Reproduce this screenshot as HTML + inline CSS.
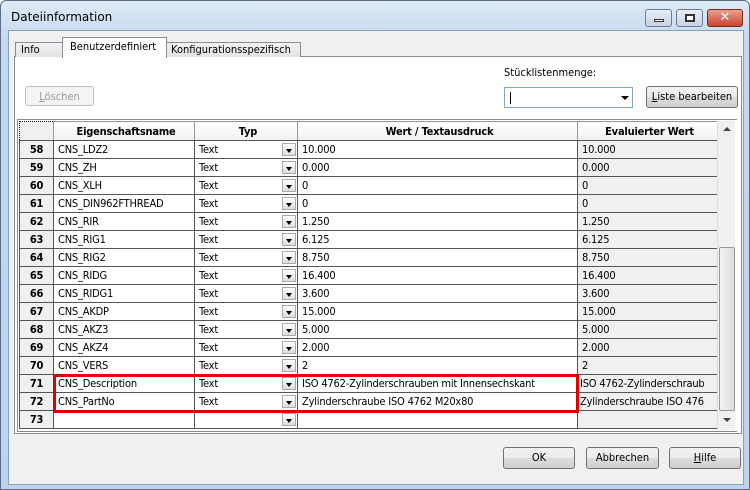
<!DOCTYPE html>
<html><head><meta charset="utf-8"><style>
*{margin:0;padding:0;box-sizing:border-box}
body{width:750px;height:490px;overflow:hidden;background:#fff;font-family:Tahoma,"DejaVu Sans","Liberation Sans",sans-serif;font-size:11px;color:#000;position:relative}
.a{position:absolute}
#frame{left:0;top:0;width:750px;height:490px;background:linear-gradient(#dfeaf6,#c4d8ee 40px,#bcd3ec);border:1px solid #5a6e8a;border-radius:6px 6px 0 0}
#client{left:8px;top:30px;width:736px;height:455px;background:#f0f0f0;border:1px solid #8aa0bc}
.btn{border:1px solid #707070;border-radius:3px;background:linear-gradient(#f2f2f2,#ebebeb 50%,#dddddd 51%,#cfcfcf);text-align:center;line-height:19px;font-size:11px}
.tab{border:1px solid #898c95;border-bottom:none;background:linear-gradient(#f2f2f2,#e3e3e3);padding-left:5px;line-height:14px}
.c{font-family:"DejaVu Sans Condensed","DejaVu Sans",sans-serif}
table{border-collapse:collapse;position:absolute;left:19px;top:121px;table-layout:fixed}
td{border:1px solid #555;height:18px;padding:0 0 0 4px;white-space:nowrap;overflow:hidden;font-size:11px;font-family:"DejaVu Sans Condensed","DejaVu Sans",sans-serif;letter-spacing:-0.2px}
td.n{background:#f0f0f0;font-weight:bold;text-align:center;padding:0}
td.e{background:#f0f0f0}
tr.h td{height:19px;background:linear-gradient(#fff,#f0f0f0);font-weight:bold;text-align:center;border-color:#999 #999 #555 #999}
td.t{position:relative}
td.t i{position:absolute;right:1px;top:2px;width:14px;height:13px;border:1px solid #aaa;background:linear-gradient(#fff,#ddd)}
td.t i:after{content:"";position:absolute;left:3px;top:5px;border:3px solid transparent;border-top:4px solid #000}
</style></head><body>
<div id="frame" class="a"></div>
<div class="a" style="left:11px;top:10px;font-size:12px;font-family:'DejaVu Sans',sans-serif;color:#000">Dateiinformation</div>
<div class="a" style="left:645px;top:9px;width:27px;height:18px;border:1px solid #6a7c96;border-radius:3px;background:linear-gradient(#e8eef7,#c5d3e6)"><div class="a" style="left:8px;top:9px;width:10px;height:3px;background:#fff;border:1px solid #333"></div></div>
<div class="a" style="left:676px;top:9px;width:27px;height:18px;border:1px solid #6a7c96;border-radius:3px;background:linear-gradient(#e8eef7,#c5d3e6)"><div class="a" style="left:8px;top:4px;width:10px;height:8px;border:2px solid #333;background:#fff"></div></div>
<div class="a" style="left:707px;top:9px;width:36px;height:18px;border:1px solid #7a2a20;border-radius:3px;background:linear-gradient(#e8a090,#c7452e);color:#fff;font-weight:bold;text-align:center;line-height:16px;font-size:13px">✕</div>
<div id="client" class="a"></div>
<div class="a" style="left:14px;top:56px;width:728px;height:378px;background:#fff;border:1px solid #898c95"></div>
<div class="a tab c" style="left:15px;top:42px;width:48px;height:15px">Info</div>
<div class="a tab c" style="left:166px;top:42px;width:135px;height:15px;padding-left:4px">Konfigurationsspezifisch</div>
<div class="a c" style="left:62px;top:37px;width:105px;height:21px;background:#fff;border:1px solid #898c95;border-bottom:none;padding-left:7px;line-height:17px">Benutzerdefiniert</div>
<div class="a btn c" style="left:25px;top:86px;width:69px;height:20px;color:#9a9a9a;border-color:#c0c0c0;background:#f4f4f4"><u>L</u>öschen</div>
<div class="a c" style="left:504px;top:66px">Stücklistenmenge:</div>
<div class="a" style="left:504px;top:87px;width:129px;height:21px;border:1px solid #7fa6cc;background:#fff"><div class="a" style="left:5px;top:4px;width:1px;height:12px;background:#000"></div><div class="a" style="left:116px;top:8px;border:4px solid transparent;border-top:4px solid #000"></div></div>
<div class="a btn c" style="left:646px;top:86px;width:92px;height:22px;line-height:20px"><u>L</u>iste bearbeiten</div>
<table>
<colgroup><col style="width:34px"><col style="width:141px"><col style="width:103px"><col style="width:280px"><col style="width:140px"></colgroup>
<tr class="h"><td style="border:1px dotted #000;background:#f0f0f0"></td><td>Eigenschaftsname</td><td>Typ</td><td>Wert / Textausdruck</td><td>Evaluierter Wert</td></tr>
<tr><td class="n">58</td><td>CNS_LDZ2</td><td class="t">Text<i></i></td><td>10.000</td><td class="e">10.000</td></tr>
<tr><td class="n">59</td><td>CNS_ZH</td><td class="t">Text<i></i></td><td>0.000</td><td class="e">0.000</td></tr>
<tr><td class="n">60</td><td>CNS_XLH</td><td class="t">Text<i></i></td><td>0</td><td class="e">0</td></tr>
<tr><td class="n">61</td><td>CNS_DIN962FTHREAD</td><td class="t">Text<i></i></td><td>0</td><td class="e">0</td></tr>
<tr><td class="n">62</td><td>CNS_RIR</td><td class="t">Text<i></i></td><td>1.250</td><td class="e">1.250</td></tr>
<tr><td class="n">63</td><td>CNS_RIG1</td><td class="t">Text<i></i></td><td>6.125</td><td class="e">6.125</td></tr>
<tr><td class="n">64</td><td>CNS_RIG2</td><td class="t">Text<i></i></td><td>8.750</td><td class="e">8.750</td></tr>
<tr><td class="n">65</td><td>CNS_RIDG</td><td class="t">Text<i></i></td><td>16.400</td><td class="e">16.400</td></tr>
<tr><td class="n">66</td><td>CNS_RIDG1</td><td class="t">Text<i></i></td><td>3.600</td><td class="e">3.600</td></tr>
<tr><td class="n">67</td><td>CNS_AKDP</td><td class="t">Text<i></i></td><td>15.000</td><td class="e">15.000</td></tr>
<tr><td class="n">68</td><td>CNS_AKZ3</td><td class="t">Text<i></i></td><td>5.000</td><td class="e">5.000</td></tr>
<tr><td class="n">69</td><td>CNS_AKZ4</td><td class="t">Text<i></i></td><td>2.000</td><td class="e">2.000</td></tr>
<tr><td class="n">70</td><td>CNS_VERS</td><td class="t">Text<i></i></td><td>2</td><td class="e">2</td></tr>
<tr><td class="n">71</td><td>CNS_Description</td><td class="t">Text<i></i></td><td>ISO 4762-Zylinderschrauben mit Innensechskant</td><td class="e" style="padding-left:2px">ISO 4762-Zylinderschraub</td></tr>
<tr><td class="n">72</td><td>CNS_PartNo</td><td class="t">Text<i></i></td><td>Zylinderschraube ISO 4762 M20x80</td><td class="e" style="padding-left:2px">Zylinderschraube ISO 476</td></tr>
<tr><td class="n">73</td><td></td><td class="t"><i></i></td><td></td><td class="e"></td></tr>
</table>
<div class="a" style="left:17px;top:119px;width:720px;height:313px;border:1px solid #888;border-right:none;pointer-events:none"></div>
<div class="a" style="left:717px;top:121px;width:18px;height:309px;background:#f0f0f0;border-left:1px solid #ddd"><div class="a" style="left:5px;top:6px;border:4px solid transparent;border-bottom:4px solid #444;border-top:none"></div><div class="a" style="left:1px;top:126px;width:16px;height:164px;border:1px solid #999;border-radius:2px;background:linear-gradient(90deg,#f4f4f4,#dcdcdc)"></div><div class="a" style="left:5px;top:297px;border:4px solid transparent;border-top:4px solid #444;border-bottom:none"></div></div>
<div class="a" style="left:53px;top:374px;width:526px;height:39px;border:3px solid #e00000"></div>
<div class="a btn c" style="left:503px;top:447px;width:72px;height:22px;line-height:20px">OK</div>
<div class="a btn c" style="left:586px;top:447px;width:73px;height:22px;line-height:20px">Abbrechen</div>
<div class="a btn c" style="left:669px;top:447px;width:72px;height:22px;line-height:20px"><u>H</u>ilfe</div>
</body></html>
